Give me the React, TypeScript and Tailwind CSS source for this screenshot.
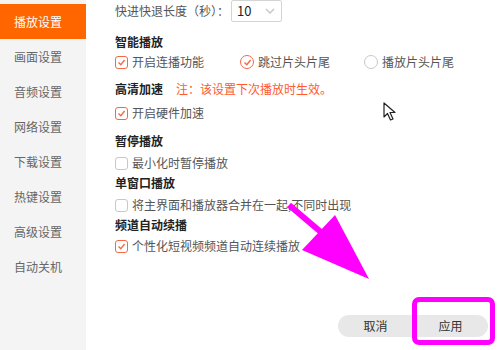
import React from 'react'

const menu = ['播放设置', '画面设置', '音频设置', '网络设置', '下载设置', '热键设置', '高级设置', '自动关机']

const CheckBox = ({ checked }: { checked: boolean }) => (
  <span
    className={`inline-flex w-[13px] h-[13px] rounded-[3px] border items-center justify-center shrink-0 ${checked ? 'border-[#f26a45]' : 'border-[#c8c8c8]'}`}
  >
    {checked && (
      <svg width="9" height="9" viewBox="0 0 9 9">
        <path d="M1.5 4.5 L3.8 6.8 L7.6 2" stroke="#f26a45" strokeWidth="1.4" fill="none" />
      </svg>
    )}
  </span>
)

const Radio = ({ checked }: { checked: boolean }) => (
  <span
    className={`inline-flex w-[14px] h-[14px] rounded-full border items-center justify-center shrink-0 ${checked ? 'border-[#f26a45]' : 'border-[#c8c8c8]'}`}
  >
    {checked && (
      <svg width="9" height="9" viewBox="0 0 9 9">
        <path d="M1.5 4.5 L3.8 6.8 L7.6 2" stroke="#f26a45" strokeWidth="1.4" fill="none" />
      </svg>
    )}
  </span>
)

const Option = ({ checked, label, className = '' }: { checked: boolean; label: string; className?: string }) => (
  <div className={`flex items-center h-[20px] gap-[4px] text-[12px] text-[#555] ${className}`}>
    <CheckBox checked={checked} />
    <span>{label}</span>
  </div>
)

const Heading = ({ label, className = '' }: { label: string; className?: string }) => (
  <div className={`flex items-center h-[20px] text-[12px] font-bold text-[#222] ${className}`}>{label}</div>
)

export default function App() {
  return (
    <div
      className="relative flex w-[500px] h-[350px] bg-white overflow-hidden"
      style={{ fontFamily: '"Noto Sans CJK SC", "Noto Sans", sans-serif' }}
    >
      {/* sidebar */}
      <div className="w-[86px] h-full bg-[#f4f4f4] pt-[4px] flex flex-col">
        {menu.map((item, i) => (
          <div
            key={item}
            className={`h-[35px] flex items-center pl-[14px] text-[12px] ${i === 0 ? 'bg-[#ff6600] text-white' : 'text-[#666]'}`}
          >
            {item}
          </div>
        ))}
      </div>

      {/* content */}
      <div className="flex-1 flex flex-col pl-[29px]">
        <div className="flex items-center h-[22px] text-[12px] text-[#555]">
          <span>快进快退长度（秒）：</span>
          <div className="ml-[2px] w-[51px] h-[22px] border border-[#d4d4d4] rounded-[2px] flex items-center justify-between pl-[5px] pr-[6px]">
            <span className="text-[13px] text-[#222]">10</span>
            <svg width="10" height="6" viewBox="0 0 10 6">
              <path d="M1 1 L5 5 L9 1" stroke="#c8c8c8" strokeWidth="1.5" fill="none" />
            </svg>
          </div>
        </div>

        <Heading label="智能播放" className="mt-[10px]" />
        <div className="flex items-center h-[20px] text-[12px] text-[#555]">
          <div className="flex items-center gap-[4px] w-[125px]">
            <CheckBox checked />
            <span>开启连播功能</span>
          </div>
          <div className="flex items-center gap-[4px] w-[124px]">
            <Radio checked />
            <span>跳过片头片尾</span>
          </div>
          <div className="flex items-center gap-[4px]">
            <Radio checked={false} />
            <span>播放片头片尾</span>
          </div>
        </div>

        <div className="flex items-center h-[20px] mt-[7px]">
          <span className="text-[12px] font-bold text-[#222] w-[61px]">高清加速</span>
          <span className="text-[12px] text-[#ff5a2e]">注：该设置下次播放时生效。</span>
        </div>
        <Option checked label="开启硬件加速" className="mt-[4px]" />

        <Heading label="暂停播放" className="mt-[8px]" />
        <Option checked={false} label="最小化时暂停播放" className="mt-[2px]" />

        <Heading label="单窗口播放" />
        <Option checked={false} label="将主界面和播放器合并在一起,不同时出现" className="mt-[2px]" />

        <Heading label="频道自动续播" />
        <Option checked label="个性化短视频频道自动连续播放" className="mt-[1px]" />

        <div className="mt-auto flex justify-end pr-[12px] pb-[13px]">
          <button className="w-[75px] h-[22px] rounded-l-full bg-[#e8e8e8] text-[12px] text-[#333]">取消</button>
          <button className="w-[75px] h-[22px] rounded-r-full bg-[#e8e8e8] text-[12px] text-[#333]">应用</button>
        </div>
      </div>

      {/* cursor */}
      <svg className="absolute left-[383px] top-[102px]" width="16" height="20" viewBox="0 0 16 20">
        <path d="M1 1 L1 15 L4.5 11.5 L7.5 18 L10 17 L7 10.5 L12 10.5 Z" fill="white" stroke="#222" strokeWidth="1.2" strokeLinejoin="round" />
      </svg>

      {/* annotation arrow */}
      <svg className="absolute left-0 top-0 pointer-events-none" width="500" height="350" viewBox="0 0 500 350">
        <line x1="289" y1="205" x2="322" y2="233" stroke="#ff00ff" strokeWidth="6" />
        <polygon points="335,215 302,250 369,279" fill="#ff00ff" />
      </svg>

      {/* annotation box */}
      <div className="absolute left-[412px] top-[297px] w-[83px] h-[48px] border-[5px] border-[#ff00ff] rounded-[7px]" />
    </div>
  )
}
